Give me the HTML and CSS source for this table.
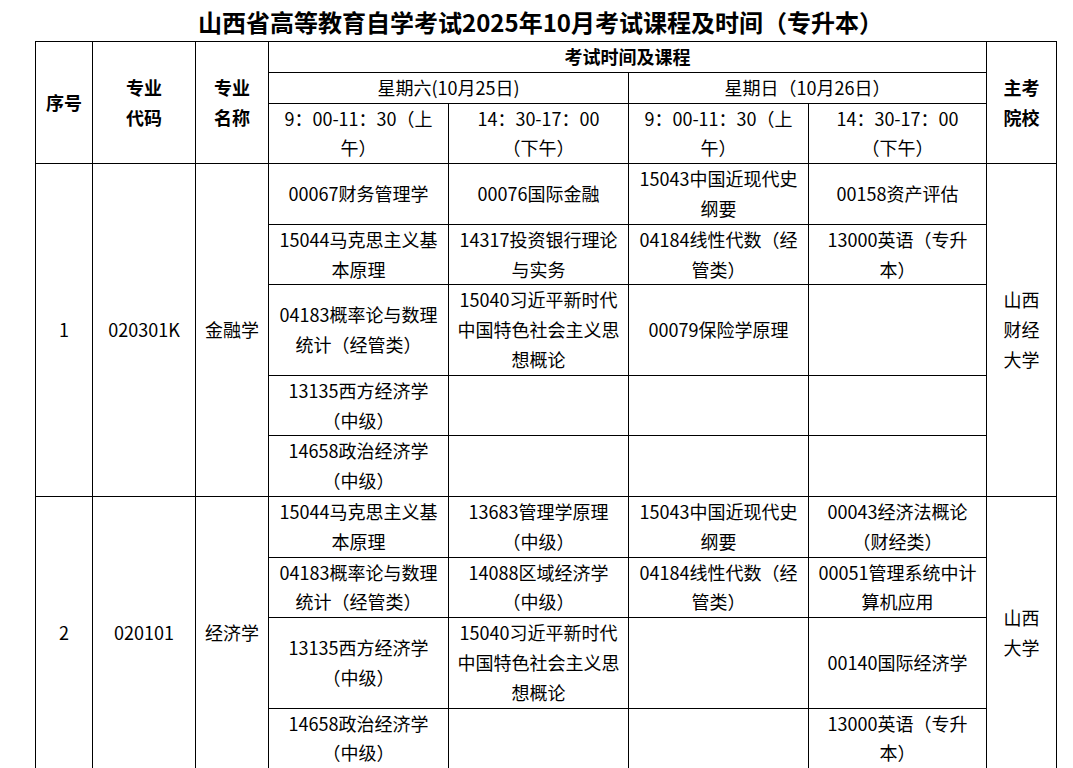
FILE: index.html
```html
<!DOCTYPE html>
<html lang="zh-CN">
<head>
<meta charset="utf-8">
<title>山西省高等教育自学考试2025年10月考试课程及时间（专升本）</title>
<link rel="stylesheet" href="styles.css">
</head>
<body>
<h1 class="title">山西省高等教育自学考试2025年10月考试课程及时间（专升本）</h1>
<table class="schedule">
  <colgroup>
    <col class="c-no">
    <col class="c-code">
    <col class="c-name">
    <col class="c-course">
    <col class="c-course">
    <col class="c-course">
    <col class="c-course-last">
    <col class="c-school">
  </colgroup>
  <thead>
    <tr>
      <th rowspan="3">序号</th>
      <th rowspan="3">专业<br>代码</th>
      <th rowspan="3">专业<br>名称</th>
      <th colspan="4">考试时间及课程</th>
      <th rowspan="3">主考<br>院校</th>
    </tr>
    <tr>
      <td colspan="2">星期六(10月25日)</td>
      <td colspan="2">星期日（10月26日）</td>
    </tr>
    <tr>
      <td>9：00-11：30（上<br>午）</td>
      <td>14：30-17：00<br>（下午）</td>
      <td>9：00-11：30（上<br>午）</td>
      <td>14：30-17：00<br>（下午）</td>
    </tr>
  </thead>
  <tbody>
    <tr>
      <td rowspan="5">1</td>
      <td rowspan="5">020301K</td>
      <td rowspan="5">金融学</td>
      <td>00067财务管理学</td>
      <td>00076国际金融</td>
      <td>15043中国近现代史<br>纲要</td>
      <td>00158资产评估</td>
      <td rowspan="5">山西<br>财经<br>大学</td>
    </tr>
    <tr>
      <td>15044马克思主义基<br>本原理</td>
      <td>14317投资银行理论<br>与实务</td>
      <td>04184线性代数（经<br>管类）</td>
      <td>13000英语（专升<br>本）</td>
    </tr>
    <tr>
      <td>04183概率论与数理<br>统计（经管类）</td>
      <td>15040习近平新时代<br>中国特色社会主义思<br>想概论</td>
      <td>00079保险学原理</td>
      <td></td>
    </tr>
    <tr>
      <td>13135西方经济学<br>（中级）</td>
      <td></td>
      <td></td>
      <td></td>
    </tr>
    <tr>
      <td>14658政治经济学<br>（中级）</td>
      <td></td>
      <td></td>
      <td></td>
    </tr>
    <tr>
      <td rowspan="4">2</td>
      <td rowspan="4">020101</td>
      <td rowspan="4">经济学</td>
      <td>15044马克思主义基<br>本原理</td>
      <td>13683管理学原理<br>（中级）</td>
      <td>15043中国近现代史<br>纲要</td>
      <td>00043经济法概论<br>（财经类）</td>
      <td rowspan="4">山西<br>大学</td>
    </tr>
    <tr>
      <td>04183概率论与数理<br>统计（经管类）</td>
      <td>14088区域经济学<br>（中级）</td>
      <td>04184线性代数（经<br>管类）</td>
      <td>00051管理系统中计<br>算机应用</td>
    </tr>
    <tr>
      <td>13135西方经济学<br>（中级）</td>
      <td>15040习近平新时代<br>中国特色社会主义思<br>想概论</td>
      <td></td>
      <td>00140国际经济学</td>
    </tr>
    <tr>
      <td>14658政治经济学<br>（中级）</td>
      <td></td>
      <td></td>
      <td>13000英语（专升<br>本）</td>
    </tr>
  </tbody>
</table>
</body>
</html>
```
FILE: styles.css
```css
html, body {
  margin: 0;
  padding: 0;
  background: #ffffff;
  color: #000000;
  font-family: "Noto Sans CJK SC", "Noto Sans", sans-serif;
}

.title {
  margin: 0;
  padding: 2px 0 0 8px;
  height: 39px;
  line-height: 39px;
  font-size: 24px;
  font-weight: 700;
  text-align: center;
  text-spacing-trim: space-all;
}

.schedule {
  margin-left: 35px;
  width: 1021px;
  border-collapse: collapse;
  table-layout: fixed;
  font-size: 18px;
  line-height: 29.8px;
  text-spacing-trim: space-all;
}

.c-no { width: 57px; }
.c-code { width: 103px; }
.c-name { width: 73px; }
.c-course { width: 180px; }
.c-course-last { width: 178px; }
.c-school { width: 70px; }

.schedule th,
.schedule td {
  border: 1px solid #000000;
  padding: 0 2px;
  text-align: center;
  vertical-align: middle;
  white-space: nowrap;
  font-weight: 400;
}

.schedule th {
  font-weight: 700;
}
```
